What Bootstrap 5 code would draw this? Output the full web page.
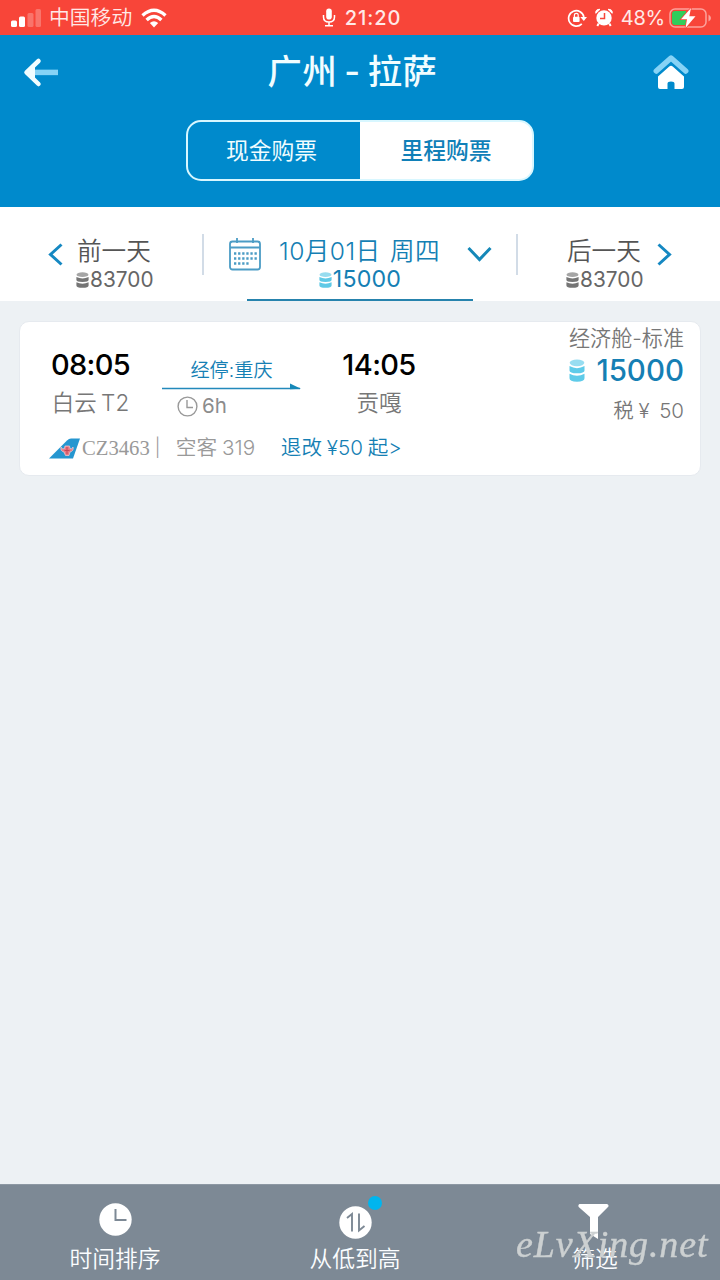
<!DOCTYPE html>
<html lang="zh-CN">
<head>
<meta charset="utf-8">
<meta name="viewport" content="width=device-width, initial-scale=1">
<title>广州 - 拉萨</title>
<link href="https://cdn.jsdelivr.net/npm/bootstrap@5.3.0/dist/css/bootstrap.min.css" rel="stylesheet">
<style>
body{font-family:Inter,"Noto Sans CJK SC",sans-serif;background:#edf1f4;height:1280px;overflow:hidden}
svg{display:block;flex:none}
.t{white-space:nowrap;display:block}
.statusbar{height:35px;background:#f84539;color:#ffe9e7;font-size:19px;line-height:36px}
.statusbar>div{flex:1 1 0}
.signal{padding-left:11px}
.carrier{font-size:20.8px;font-weight:350;line-height:39px;margin:0 9px 0 8px}
.apphead{height:172px;background:#008acc;color:#f1fdff}
.titlerow{height:74px;padding:0 31px 0 23px}
.title-txt{font-size:34.3px;line-height:76px;font-weight:500;letter-spacing:.5px;word-spacing:-2.5px;margin-left:-7px}
.seg{width:348px;height:61px;border:2px solid #d8f7ff;border-radius:15px;margin:11px auto 0;background:linear-gradient(90deg,#008acc 50%,#fff 50%);font-size:22.8px;line-height:58px;text-align:center}
.seg .off{padding-right:5px}
.seg .on{color:#1080b8;font-weight:500}
.datebar{height:94px;background:#fff;color:#555}
.day{font-size:24.6px;line-height:30px;font-weight:350}
.miles{font-size:20.8px;line-height:27px;letter-spacing:.05px;color:#666}
.rule{width:2px;height:41px;background:#d2dce7;margin-top:27px}
.blue{color:#157fb4}
.current{width:226px;border-bottom:2px solid #2683ad;margin-left:43px;height:94px;padding-top:29px}
.current .day{padding-left:32px;word-spacing:2px;letter-spacing:.45px}
.current .sum{font-size:23.2px;line-height:27px;letter-spacing:.2px}
.flight{margin:20px 19px 0;height:155px;border:1px solid #e6eaef;border-radius:10px;background:#fff;color:#777}
.legs{height:105px}
.col-a{width:141px}.col-b{width:141px}.col-c{width:154px}
.clock-t{font-size:29px;line-height:36px;font-weight:500;color:#000;letter-spacing:-.65px;padding-top:25px}
.port{font-size:22.5px;line-height:30px;padding-top:5px;color:#777;font-weight:350}
.price{padding-right:16px;margin-left:auto}
.meta{font-size:20px;line-height:30px;color:#999;padding-left:29px;margin-top:6px}
.toolbar{position:fixed;bottom:0;left:0;right:0;height:96px;background:#7d8995;border-top:1px solid #8d98a3;color:#fbfdff;font-size:22.8px;font-weight:350}
.toolbar>div{width:240px}
.toolbar .t{line-height:30px;margin-top:8px}
.toolbar .t.near{margin-top:5px}
.dot{position:absolute;left:133px;top:11px;width:14px;height:14px;border-radius:50%;background:#00b5ee}
.watermark{position:fixed;left:516px;top:1221px;font:italic 38px/46px "Liberation Serif",cursive;color:#ccd0d1;letter-spacing:.9px;-webkit-text-stroke:.4px #ccd0d1}
</style>
</head>
<body>
<svg width="0" height="0" class="position-absolute">
<symbol id="coins" viewBox="0 0 16 22" preserveAspectRatio="none"><ellipse cx="8" cy="3.700" rx="7.300" ry="3.200" opacity=".65"/><path d="M.5 6.800Q8 10.800 15.500 6.800V11Q15.500 13.700 8 13.700T.5 11Z"/><path d="M.5 14Q8 18 15.500 14V18.500Q15.500 21.700 8 21.700T.5 18.500Z"/></symbol>
</svg>

<header>
<div class="statusbar d-flex align-items-center">
  <div class="d-flex align-items-center signal">
    <svg width="30" height="20" fill="#fff"><rect y="12.500" width="6" height="6.500" rx="1.500"/><rect x="8" y="8.500" width="6" height="10.500" rx="1.500"/><g opacity=".25"><rect x="16.500" y="5" width="6" height="14" rx="1.500"/><rect x="24.500" y="1" width="5.500" height="18" rx="1.500"/></g></svg>
    <span class="t carrier">中国移动</span>
    <svg width="26" height="20" viewBox="0 0 26 20" fill="none" stroke="#fff" stroke-width="3.400"><path d="M1.500 7.500Q13-2.800 24.500 7.500M5.600 12Q13 5 20.400 12"/><path d="M8.800 15Q13 11.500 17.200 15L13 19.500Z" fill="#fff" stroke="none"/></svg>
  </div>
  <div class="d-flex align-items-center justify-content-center">
    <svg style="margin-right:9px" width="14" height="19" viewBox="0 0 14 19" fill="none" stroke="#fff" stroke-width="1.500"><rect x="4.200" y=".5" width="5.600" height="11" rx="2.800" fill="#fff" stroke="none"/><path d="M1.500 7V9Q1.500 14 7 14T12.500 9V7M7 14V17.500M3 17.700H11"/></svg>
    <span class="t" style="font-weight:500;font-size:20px;letter-spacing:.9px">21:20</span>
  </div>
  <div class="d-flex align-items-center justify-content-end pe-2">
    <svg width="20" height="20" viewBox="0 0 20 20"><path d="M14.800 15.800A7.700 7.700 0 1 1 16.900 9" fill="none" stroke="#fff" stroke-width="1.700"/><path d="M13.300 9H20L16.800 13Z" fill="#fff"/><rect x="6" y="8.700" width="6.600" height="5.300" rx="1" fill="#fff"/><path d="M7.400 9V7.300a1.900 1.900 0 0 1 3.800 0V9" fill="none" stroke="#fff" stroke-width="1.200"/></svg>
    <svg class="ms-2" width="18" height="19" viewBox="0 0 18 19" fill="#fff"><circle cx="9" cy="9.900" r="7.700"/><path d="M.8 5.300Q.2 1.200 5 1.300ZM17.200 5.300Q17.800 1.200 13 1.300Z" stroke="#fff"/><path d="M3.700 15.500L2.300 18M14.300 15.500L15.700 18" stroke="#fff" stroke-width="2"/><path d="M9.500 5V10.500H5" fill="none" stroke="#f84539" stroke-width="1.500"/></svg>
    <span class="t" style="margin:0 4px 0 8px;font-size:20px;letter-spacing:-.2px">48%</span>
    <svg width="43" height="22" viewBox="0 0 43 22"><rect x="1" y="2" width="36" height="18" rx="5" fill="none" stroke="#fff" stroke-opacity=".5" stroke-width="1.500"/><path d="M6 4H17V18H6Q3 18 3 15V7Q3 4 6 4" fill="#31ce5b"/><path d="M39.500 7.500Q42 9 42 11T39.500 14.500Z" fill="#fff" opacity=".5"/><path d="M22 1L12 12.300H18L16.500 21L26.500 9.200H20.300Z" fill="#fff" stroke="#f84539" stroke-width="1.500" paint-order="stroke"/></svg>
  </div>
</div>
<div class="apphead">
  <div class="titlerow d-flex align-items-center justify-content-between">
    <svg width="36" height="32" viewBox="0 0 36 30"><path d="M12 15.400H35" stroke="#86d3f6" stroke-width="5.500"/><path d="M15.500 4L3.500 15.400L15.500 27" fill="none" stroke="#f1fdff" stroke-width="4.500" stroke-linecap="round" stroke-linejoin="round"/><path d="M4 15.400L12 8V23Z" fill="#f1fdff"/></svg>
    <span class="t title-txt">广州 - 拉萨</span>
    <svg width="36" height="36" viewBox="0 0 36 36"><path d="M3.300 17L18 4L32.700 17" fill="none" stroke="#86d3f6" stroke-width="5.500" stroke-linecap="round" stroke-linejoin="round"/><path d="M5 22.500L16 12.700Q18 11 20 12.700L31 22.500V33Q31 35 29 35H21.500V29.500Q21.500 27.500 18 27.500T14.500 29.500V35H7Q5 35 5 33Z" fill="#fff"/></svg>
  </div>
  <div class="seg d-flex"><span class="t w-50 off">现金购票</span><span class="t w-50 on">里程购票</span></div>
</div>
</header>

<nav class="datebar d-flex">
  <div class="d-flex" style="width:202px;padding-left:48px">
    <svg style="margin-top:36px" width="15" height="23" viewBox="0 0 15 23"><path d="M13.500 1.500L2.500 11.500L13.500 21.500" fill="none" stroke="#1588c2" stroke-width="3"/></svg>
    <div style="padding:29px 0 0 14px"><span class="t day">前一天</span><span class="t miles d-flex align-items-center"><svg width="13" height="16" fill="#757575" style="margin:0 1px 0 -1px"><use href="#coins" width="13" height="16"/></svg>83700</span></div>
  </div>
  <div class="rule"></div>
  <div class="position-relative blue" style="width:312px">
    <svg class="position-absolute" style="left:25px;top:30px" width="33" height="34" viewBox="0 0 33 34" fill="none" stroke="#4b9cc5" stroke-width="1.800"><rect x="1" y="4.500" width="30" height="28" rx="2.500"/><path d="M1 10.500H31M8 1V6M24 1V6"/><path d="M5 16.500H28M5 21.500H28M5 26.500H20" stroke-width="2.300" stroke-dasharray="2.300 1.800"/></svg>
    <div class="current"><span class="t day">10月01日 周四</span><span class="t sum d-flex align-items-center justify-content-center"><svg width="13" height="16" fill="#5fc9e6" style="margin-right:1px"><use href="#coins" width="13" height="16"/></svg>15000</span></div>
    <svg class="position-absolute" style="left:263px;top:39px" width="25" height="17" viewBox="0 0 25 17"><path d="M1.500 2L12.500 13.500L23.500 2" fill="none" stroke="#1588b8" stroke-width="3"/></svg>
  </div>
  <div class="rule"></div>
  <div class="d-flex" style="padding-left:49px">
    <div style="padding-top:29px;width:77px"><span class="t day">后一天</span><span class="t miles d-flex align-items-center"><svg width="13" height="16" fill="#757575" style="margin:0 1px 0 -1px"><use href="#coins" width="13" height="16"/></svg>83700</span></div>
    <svg style="margin:36px 0 0 13px" width="15" height="23" viewBox="0 0 15 23"><path d="M1.500 1.500L12.500 11.500L1.500 21.500" fill="none" stroke="#1588c2" stroke-width="3"/></svg>
  </div>
</nav>

<main class="flight">
  <div class="legs d-flex text-center">
    <div class="col-a"><span class="t clock-t">08:05</span><span class="t port" style="word-spacing:-2px">白云 T2</span></div>
    <div class="col-b"><span class="t blue" style="font-size:19.200px;line-height:28px;padding-top:34px;font-weight:350">经停:重庆</span>
      <svg width="141" height="8" style="margin-top:-1px"><path d="M1 5.500H139" stroke="#2389bb" stroke-width="1.400"/><path d="M129 .5L140 5.800L129 6.200Z" fill="#1588b8"/></svg>
      <span class="d-flex align-items-center" style="font-size:20.500px;line-height:28px;color:#8c8c8c;padding:1px 0 0 16px"><svg width="21" height="21" fill="none" stroke="#999" stroke-width="1.400" style="margin-right:4px"><circle cx="10.500" cy="10.500" r="9.400"/><path d="M10 4V11.500H16"/></svg>6h</span></div>
    <div class="col-c"><span class="t clock-t">14:05</span><span class="t port">贡嘎</span></div>
    <div class="price text-end"><span class="t" style="font-size:21.100px;line-height:28px;padding-top:3px;font-weight:350">经济舱-标准</span>
      <span class="d-flex align-items-center justify-content-end blue" style="font-size:29.500px;line-height:34px;font-weight:500"><svg width="16" height="23" fill="#5fcbe9" style="margin-right:11px"><use href="#coins" width="16" height="23"/></svg><span class="t">15000</span></span>
      <span class="t" style="font-size:20.500px;line-height:28px;padding-top:10px;font-weight:350;word-spacing:-1px">税 ¥ &nbsp;50</span></div>
  </div>
  <div class="meta d-flex align-items-center">
    <svg width="31" height="21" viewBox="0 0 31 21"><path d="M0 20.500L18 2.500Q20 .5 22 .5H31L24 20.500Z" fill="#2596d0"/><path d="M12 9Q13 12 15.500 10.500L16 8H20.500L21 10.500Q23 12 24 9Q25 13 21 14L20 17.500H16.500L15 14Q11 13 12 9Z" fill="#e87984" stroke="#f6ced6" stroke-width=".7"/><path d="M15.500 12.500H20.500M18 9V16" stroke="#c64557"/></svg>
    <span class="t" style="font:20.700px/30px 'Liberation Serif',serif;margin-left:2px">CZ3463</span><span class="t" style="font-weight:300;font-size:18px;margin-left:5px;width:21px">|</span>
    <span class="t" style="width:105px;font-size:20.700px;word-spacing:-1px;font-weight:350">空客 319</span><span class="t blue" style="font-size:20.600px;word-spacing:-1px;font-weight:350">退改 ¥50 起&gt;</span>
  </div>
</main>

<footer class="toolbar d-flex text-center">
  <div style="padding-top:18px;margin-left:-5px"><svg class="mx-auto" width="33" height="33"><circle cx="16.500" cy="16.500" r="16.200" fill="#fff"/><path d="M16.500 6V17H27.500" fill="none" stroke="#7d8995" stroke-width="2"/></svg><span class="t">时间排序</span></div>
  <div class="position-relative" style="padding-top:21px"><svg class="mx-auto" width="33" height="33"><circle cx="16.500" cy="16.500" r="16.200" fill="#fff"/><path d="M8 12L13 8V25.500M20 7.500V24.500L25.500 20" fill="none" stroke="#7d8995" stroke-width="1.900"/></svg><i class="dot"></i><span class="t near">从低到高</span></div>
  <div style="padding-top:18px"><svg style="margin-left:103px" width="31" height="36"><path d="M1.500 1H29Q31.500 2 30 4L20 14V36L12 31V14L.7 4Q-.3 2 1.500 1Z" fill="#fff"/></svg><span class="t near">筛选</span></div>
</footer>
<div class="watermark">eLvXing.net</div>
<script src="https://cdn.jsdelivr.net/npm/bootstrap@5.3.0/dist/js/bootstrap.bundle.min.js"></script>
</body>
</html>
